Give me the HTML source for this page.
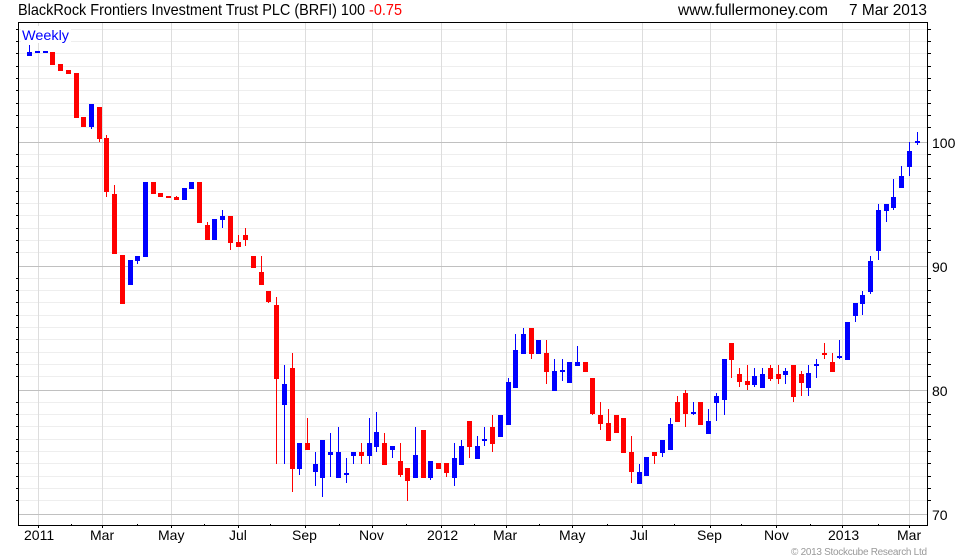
<!DOCTYPE html>
<html><head><meta charset="utf-8"><style>html,body{margin:0;padding:0;background:#fff}svg{display:block}text{font-family:"Liberation Sans",sans-serif;fill:#000}</style></head><body>
<svg width="980" height="560" viewBox="0 0 980 560" shape-rendering="crispEdges">
<path fill="none" stroke="#eee" d="M19 29.5H927M19 41.5H927M19 53.5H927M19 66.5H927M19 78.5H927M19 90.5H927M19 103.5H927M19 115.5H927M19 127.5H927M19 154.5H927M19 166.5H927M19 178.5H927M19 191.5H927M19 203.5H927M19 215.5H927M19 228.5H927M19 240.5H927M19 252.5H927M19 278.5H927M19 290.5H927M19 302.5H927M19 315.5H927M19 327.5H927M19 339.5H927M19 352.5H927M19 364.5H927M19 376.5H927M19 402.5H927M19 414.5H927M19 426.5H927M19 439.5H927M19 451.5H927M19 463.5H927M19 476.5H927M19 488.5H927M19 500.5H927"/>
<path fill="none" stroke="#ddd" d="M38.5 23V525M102.5 23V525M171.5 23V525M238.5 23V525M305.5 23V525M372.5 23V525M441.5 23V525M506.5 23V525M572.5 23V525M642.5 23V525M710.5 23V525M776.5 23V525M842.5 23V525M909.5 23V525"/>
<path fill="none" stroke="#c0c0c0" d="M19 142.5H927M19 266.5H927M19 390.5H927M19 514.5H927"/>
<rect x="21" y="26" width="50" height="17" fill="#fff"/>
<rect x="18.5" y="22.5" width="909" height="503" fill="none" stroke="#000"/>
<path fill="none" stroke="#000" d="M16 29.5H18M16 41.5H18M16 53.5H18M16 66.5H18M16 78.5H18M16 90.5H18M16 103.5H18M16 115.5H18M16 127.5H18M16 154.5H18M16 166.5H18M16 178.5H18M16 191.5H18M16 203.5H18M16 215.5H18M16 228.5H18M16 240.5H18M16 252.5H18M16 278.5H18M16 290.5H18M16 302.5H18M16 315.5H18M16 327.5H18M16 339.5H18M16 352.5H18M16 364.5H18M16 376.5H18M16 402.5H18M16 414.5H18M16 426.5H18M16 439.5H18M16 451.5H18M16 463.5H18M16 476.5H18M16 488.5H18M16 500.5H18M928 29.5H931M928 41.5H931M928 53.5H931M928 66.5H931M928 78.5H931M928 90.5H931M928 103.5H931M928 115.5H931M928 127.5H931M928 154.5H931M928 166.5H931M928 178.5H931M928 191.5H931M928 203.5H931M928 215.5H931M928 228.5H931M928 240.5H931M928 252.5H931M928 278.5H931M928 290.5H931M928 302.5H931M928 315.5H931M928 327.5H931M928 339.5H931M928 352.5H931M928 364.5H931M928 376.5H931M928 402.5H931M928 414.5H931M928 426.5H931M928 439.5H931M928 451.5H931M928 463.5H931M928 476.5H931M928 488.5H931M928 500.5H931M38.5 526V528M102.5 526V528M171.5 526V528M238.5 526V528M305.5 526V528M372.5 526V528M441.5 526V528M506.5 526V528M572.5 526V528M642.5 526V528M710.5 526V528M776.5 526V528M842.5 526V528M909.5 526V528M71.5 524V525M137.5 524V525M204.5 524V525M270.5 524V525M339.5 524V525M406.5 524V525M474.5 524V525M539.5 524V525M607.5 524V525M674.5 524V525M741.5 524V525M810.5 524V525M878.5 524V525"/>
<g fill="#f00">
<path d="M50 52h5v13h-5zM58 64h5v7h-5zM66 70h5v4h-5zM74 73h5v45h-5zM81 117h5v10h-5zM97 107h5v32h-5zM99 139h1v3h-1zM104 138h5v54h-5zM106 135h1v62h-1zM112 194h5v60h-5zM114 185h1v9h-1zM120 255h5v49h-5zM151 182h5v12h-5zM158 193h5v4h-5zM166 196h5v2h-5zM174 197h5v3h-5zM176 196h1v1h-1zM197 182h5v41h-5zM205 225h5v15h-5zM207 222h1v3h-1zM228 216h5v27h-5zM230 243h1v7h-1zM236 242h5v5h-5zM238 235h1v7h-1zM243 235h5v5h-5zM245 228h1v18h-1zM251 256h5v12h-5zM259 272h5v13h-5zM261 256h1v16h-1zM266 291h5v11h-5zM268 302h1v1h-1zM274 305h5v74h-5zM276 297h1v167h-1zM290 368h5v101h-5zM292 353h1v139h-1zM305 443h5v7h-5zM307 418h1v25h-1z"/>
<path d="M359 452h5v4h-5zM361 443h1v21h-1zM382 443h5v22h-5zM384 433h1v10h-1zM398 461h5v14h-5zM400 443h1v34h-1zM405 468h5v13h-5zM407 481h1v20h-1zM421 430h5v48h-5zM436 463h5v6h-5zM444 463h5v10h-5zM446 473h1v4h-1zM467 421h5v26h-5zM469 447h1v11h-1zM490 427h5v17h-5zM492 415h1v37h-1zM529 328h5v26h-5zM531 354h1v5h-1zM544 353h5v19h-5zM546 340h1v44h-1zM583 362h5v10h-5zM590 378h5v36h-5zM592 414h1v1h-1zM598 415h5v9h-5zM600 402h1v28h-1zM606 423h5v18h-5zM608 409h1v14h-1zM614 415h5v18h-5zM621 418h5v35h-5zM629 452h5v20h-5zM631 436h1v47h-1zM652 452h5v4h-5zM654 456h1v8h-1zM675 402h5v20h-5zM677 396h1v6h-1zM683 393h5v21h-5zM685 390h1v37h-1zM698 402h5v23h-5zM729 343h5v17h-5zM731 360h1v18h-1zM737 374h5v8h-5zM739 368h1v19h-1zM745 381h5v4h-5zM747 365h1v25h-1zM768 368h5v11h-5zM770 365h1v16h-1zM776 374h5v5h-5zM778 365h1v19h-1zM791 365h5v32h-5zM793 397h1v5h-1zM799 374h5v9h-5zM801 371h1v25h-1zM822 353h5v2h-5zM824 343h1v16h-1zM830 362h5v10h-5zM832 353h1v9h-1z"/>
</g>
<g fill="#00f">
<path d="M27 52h5v4h-5zM29 45h1v7h-1zM35 51h5v2h-5zM43 51h5v2h-5zM89 104h5v23h-5zM91 127h1v2h-1zM128 260h5v25h-5zM135 256h5v5h-5zM137 261h1v3h-1zM143 182h5v75h-5zM182 188h5v12h-5zM189 182h5v7h-5zM212 219h5v21h-5zM220 216h5v4h-5zM222 210h1v18h-1zM282 384h5v21h-5zM284 365h1v99h-1zM297 443h5v26h-5zM299 469h1v6h-1zM313 464h5v8h-5zM315 452h1v34h-1zM320 440h5v38h-5zM322 478h1v19h-1zM328 452h5v3h-5zM330 433h1v44h-1zM336 452h5v26h-5zM338 427h1v25h-1zM344 473h5v2h-5zM346 458h1v25h-1z"/>
<path d="M351 452h5v4h-5zM353 456h1v8h-1zM367 443h5v13h-5zM369 418h1v46h-1zM374 432h5v15h-5zM376 412h1v40h-1zM390 446h5v4h-5zM392 450h1v8h-1zM413 455h5v23h-5zM415 427h1v28h-1zM428 461h5v17h-5zM430 478h1v2h-1zM452 458h5v20h-5zM454 443h1v43h-1zM459 446h5v19h-5zM461 440h1v6h-1zM475 446h5v13h-5zM477 436h1v10h-1zM482 439h5v2h-5zM484 427h1v19h-1zM498 415h5v22h-5zM506 382h5v43h-5zM508 378h1v4h-1zM513 350h5v38h-5zM515 334h1v16h-1zM521 334h5v20h-5zM523 328h1v6h-1zM536 340h5v14h-5zM552 371h5v20h-5zM554 359h1v12h-1zM560 370h5v2h-5zM562 359h1v22h-1zM567 362h5v21h-5zM575 362h5v4h-5zM577 346h1v16h-1zM637 472h5v12h-5zM639 464h1v8h-1zM644 457h5v19h-5zM660 440h5v13h-5zM662 453h1v4h-1zM668 424h5v26h-5zM670 418h1v6h-1zM691 412h5v2h-5zM693 402h1v13h-1zM706 421h5v13h-5zM708 409h1v12h-1zM714 396h5v7h-5zM716 393h1v28h-1zM722 359h5v41h-5zM724 400h1v15h-1zM752 376h5v9h-5zM754 368h1v19h-1zM760 374h5v14h-5zM762 368h1v6h-1zM783 371h5v4h-5zM785 368h1v16h-1zM806 373h5v15h-5zM808 365h1v31h-1zM814 364h5v2h-5zM816 359h1v19h-1zM837 356h5v2h-5zM839 340h1v19h-1zM845 322h5v38h-5zM853 303h5v13h-5zM855 316h1v6h-1zM860 295h5v9h-5zM862 291h1v24h-1zM868 261h5v31h-5zM870 256h1v38h-1zM876 210h5v41h-5zM878 204h1v56h-1zM884 204h5v7h-5zM886 211h1v11h-1zM891 197h5v11h-5zM893 179h1v31h-1zM899 176h5v12h-5zM901 166h1v10h-1zM907 151h5v16h-5zM909 142h1v34h-1zM915 141h5v2h-5zM917 132h1v13h-1z"/>
</g>
<g shape-rendering="auto">
<text x="18" y="15" font-size="16" textLength="384" lengthAdjust="spacingAndGlyphs">BlackRock Frontiers Investment Trust PLC (BRFI) 100 <tspan fill="#f00" style="fill:#f00">-0.75</tspan></text>
<text x="678" y="15" font-size="16" textLength="150" lengthAdjust="spacingAndGlyphs">www.fullermoney.com</text>
<text x="849" y="15" font-size="16" textLength="78" lengthAdjust="spacingAndGlyphs">7 Mar 2013</text>
<text x="22" y="40" font-size="14" style="fill:#00f" textLength="47" lengthAdjust="spacingAndGlyphs">Weekly</text>
<text x="932" y="148" font-size="14">100</text>
<text x="932" y="272" font-size="14">90</text>
<text x="932" y="396" font-size="14">80</text>
<text x="932" y="520" font-size="14">70</text>
<text x="24" y="540" font-size="14">2011</text>
<text x="90" y="540" font-size="14">Mar</text>
<text x="158" y="540" font-size="14">May</text>
<text x="229" y="540" font-size="14">Jul</text>
<text x="292" y="540" font-size="14">Sep</text>
<text x="359" y="540" font-size="14">Nov</text>
<text x="427" y="540" font-size="14">2012</text>
<text x="493" y="540" font-size="14">Mar</text>
<text x="559" y="540" font-size="14">May</text>
<text x="630" y="540" font-size="14">Jul</text>
<text x="697" y="540" font-size="14">Sep</text>
<text x="764" y="540" font-size="14">Nov</text>
<text x="828" y="540" font-size="14">2013</text>
<text x="897" y="540" font-size="14">Mar</text>
<text x="791" y="555" font-size="10" style="fill:#999" textLength="136" lengthAdjust="spacing">© 2013 Stockcube Research Ltd</text>
</g>
</svg>
</body></html>
